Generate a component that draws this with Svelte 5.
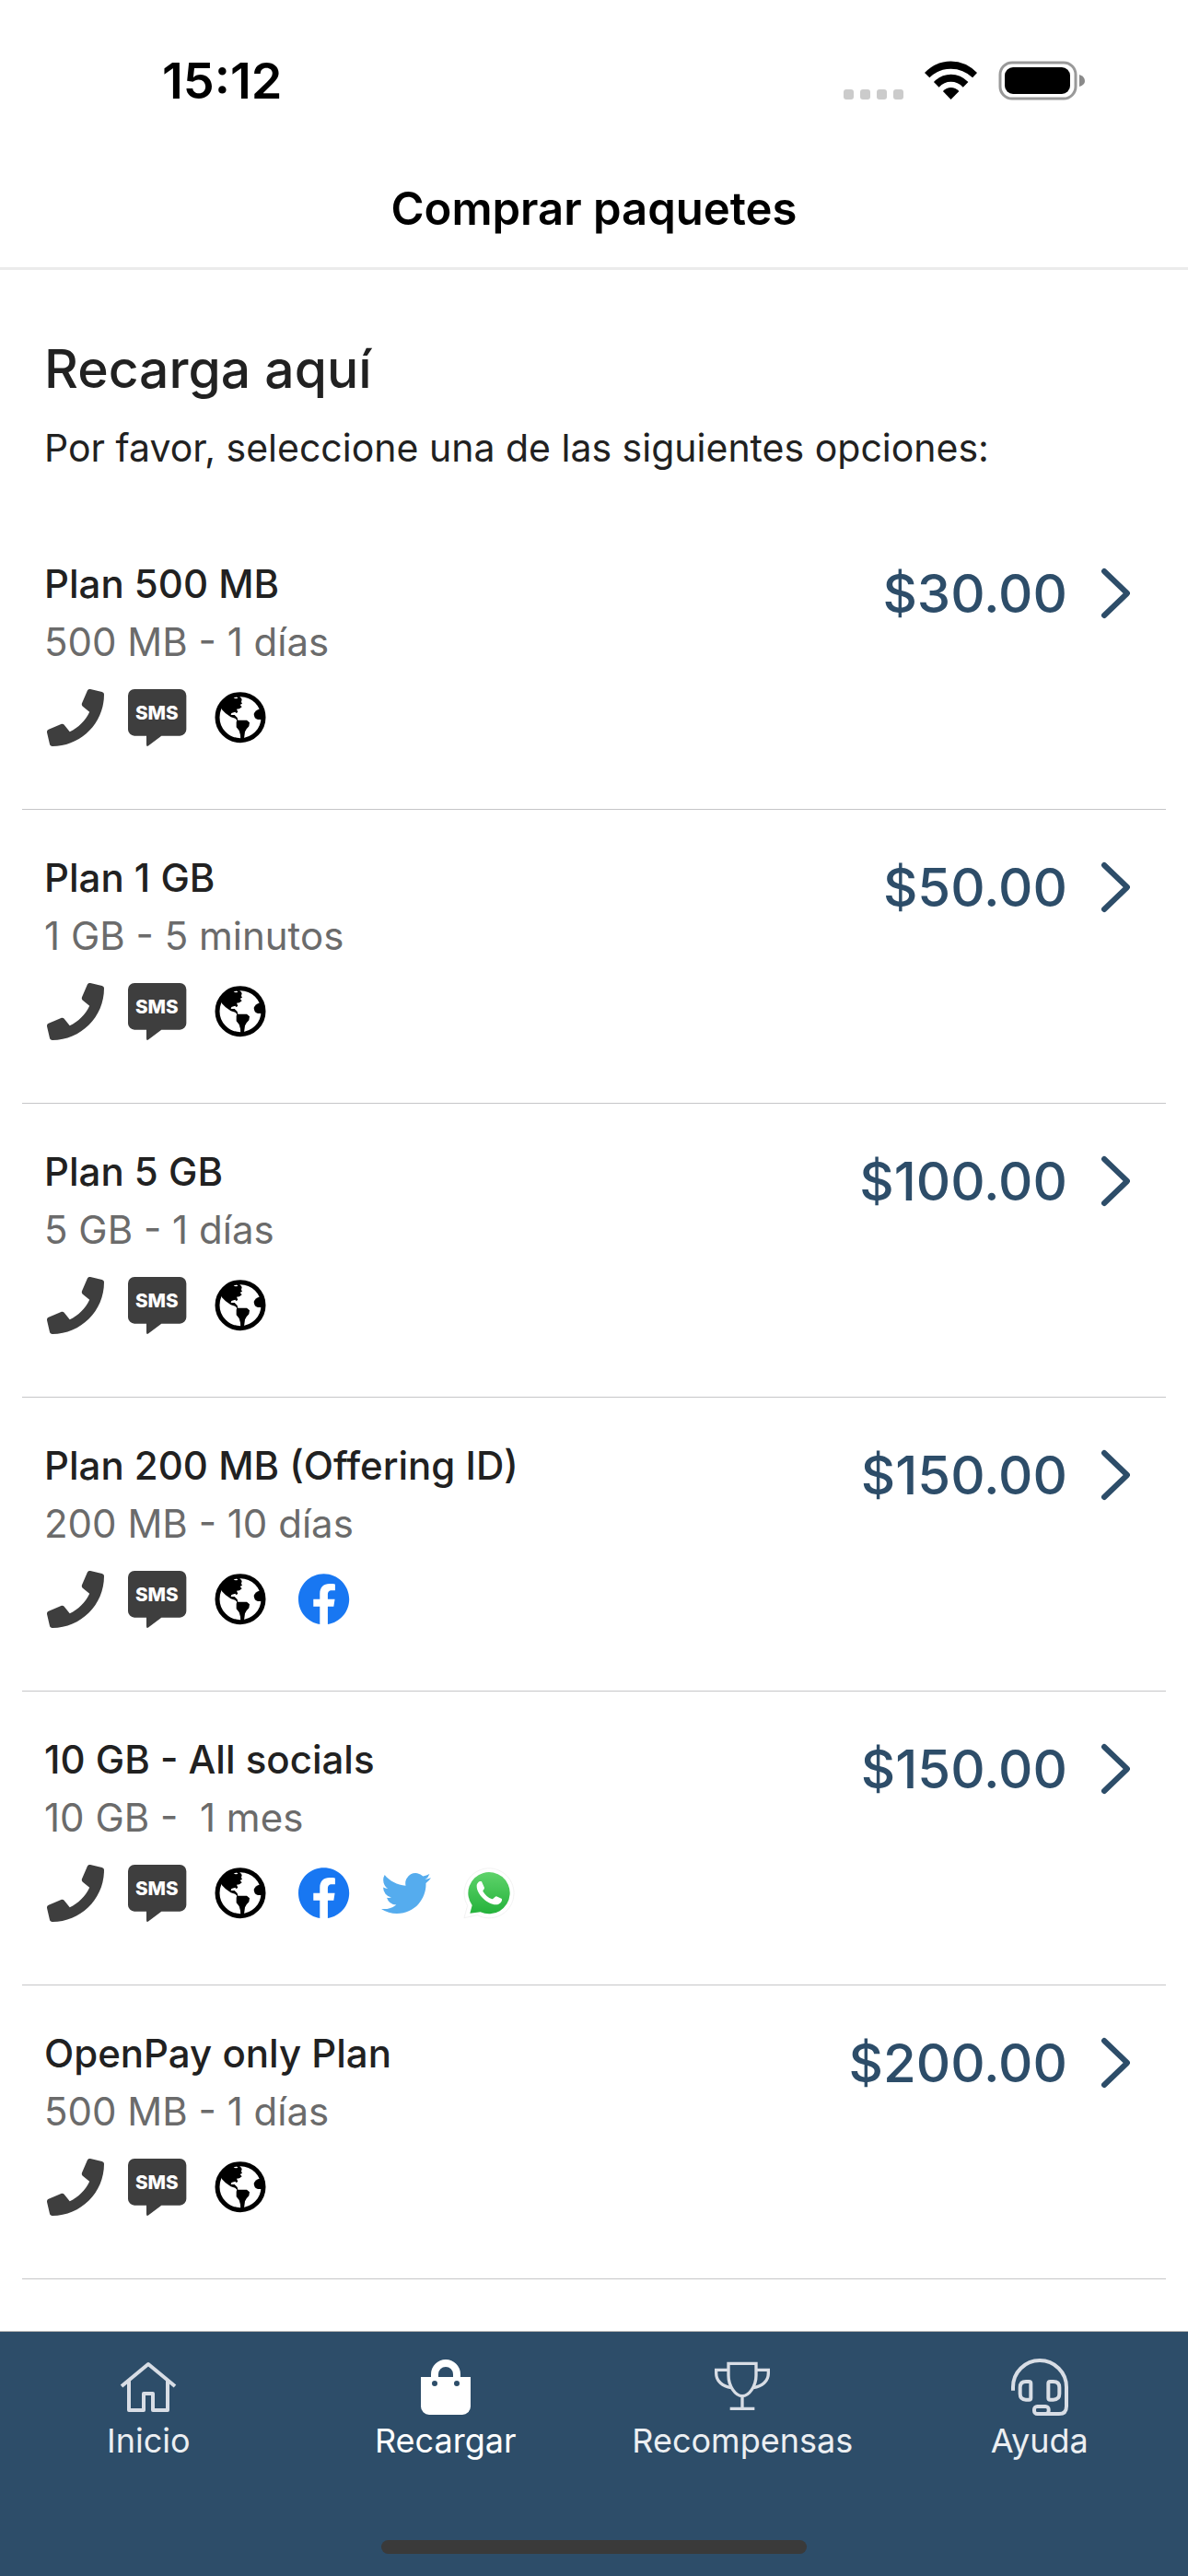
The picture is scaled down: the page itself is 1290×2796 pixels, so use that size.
<script>
  const plans = [
    { name: 'Plan 500 MB', detail: '500 MB - 1 días', price: '$30.00', services: ['phone', 'sms', 'globe'] },
    { name: 'Plan 1 GB', detail: '1 GB - 5 minutos', price: '$50.00', services: ['phone', 'sms', 'globe'] },
    { name: 'Plan 5 GB', detail: '5 GB - 1 días', price: '$100.00', services: ['phone', 'sms', 'globe'] },
    { name: 'Plan 200 MB (Offering ID)', detail: '200 MB - 10 días', price: '$150.00', services: ['phone', 'sms', 'globe', 'facebook'] },
    { name: '10 GB - All socials', detail: '10 GB -  1 mes', price: '$150.00', services: ['phone', 'sms', 'globe', 'facebook', 'twitter', 'whatsapp'] },
    { name: 'OpenPay only Plan', detail: '500 MB - 1 días', price: '$200.00', services: ['phone', 'sms', 'globe'] }
  ];

  const tabs = [
    { label: 'Inicio', icon: 'home', active: false },
    { label: 'Recargar', icon: 'bag', active: true },
    { label: 'Recompensas', icon: 'trophy', active: false },
    { label: 'Ayuda', icon: 'headset', active: false }
  ];
</script>

{#snippet serviceIcon(kind)}
  {#if kind === 'phone'}
    <svg class="service" viewBox="0 0 512 512" aria-hidden="true">
      <path fill="#3e3e3e" d="M493.4 24.6l-104-24c-11.3-2.6-22.9 3.3-27.5 13.9l-48 112c-4.2 9.8-1.4 21.3 6.9 28l60.6 49.6c-36 76.7-98.9 140.5-177.2 177.2l-49.6-60.6c-6.8-8.3-18.2-11.1-28-6.9l-112 48C3.9 366.5-2 378.1.6 389.4l24 104C27.1 504.2 36.7 512 48 512c256.1 0 464-207.5 464-464 0-11.2-7.7-20.9-18.6-23.4z" />
    </svg>
  {:else if kind === 'sms'}
    <svg class="service" viewBox="0 0 186 186" aria-hidden="true">
      <path fill="#3e3e3e" d="M15 0H163A21 21 0 0 1 184 21V131A21 21 0 0 1 163 152H103L61 184Q54 189 54 180V152H15A21 21 0 0 1 -6 131V21A21 21 0 0 1 15 0Z" />
      <text class="sms-label" x="88" y="98" text-anchor="middle">SMS</text>
    </svg>
  {:else if kind === 'globe'}
    <svg class="service" viewBox="-7 -9 186 186" aria-hidden="true">
      <circle cx="83" cy="83" r="75" fill="none" stroke="#000" stroke-width="15" />
      <path d="M14 50L44 18L58 14Q62 22 68 22L75 21L70 14L82 16L88 24L86 33L89 38L82 42L88 49L80 55L71 56L75 66L69 69L66 65L54 69L52 75L64 75L73 84L75 92H104L113 100L111 112L103 121L98 130L94 160H84L83 140L79 126L70 115V98L72 92L66 86L52 82L35 70L23 58L18 44Z" />
      <path d="M149 54Q130 60 127 72Q128 88 140 90L156 90V56Z" />
    </svg>
  {:else if kind === 'facebook'}
    <svg class="service" viewBox="0 0 62 62" aria-hidden="true">
      <g transform="translate(3 3) scale(2.3)">
        <path fill="#1877f2" d="M24 12.073c0-6.627-5.373-12-12-12s-12 5.373-12 12c0 5.99 4.388 10.954 10.125 11.854v-8.385H7.078v-3.47h3.047V9.43c0-3.007 1.792-4.669 4.533-4.669 1.312 0 2.686.235 2.686.235v2.953H15.83c-1.491 0-1.956.925-1.956 1.874v2.25h3.328l-.532 3.47h-2.796v8.385C19.612 23.027 24 18.062 24 12.073z" />
      </g>
    </svg>
  {:else if kind === 'twitter'}
    <svg class="service" viewBox="0 0 62 62" aria-hidden="true">
      <g transform="translate(3 4) scale(2.25)">
        <path fill="#55acee" d="M23.953 4.57a10 10 0 01-2.825.775 4.958 4.958 0 002.163-2.723c-.951.555-2.005.959-3.127 1.184a4.92 4.92 0 00-8.384 4.482C7.69 8.095 4.067 6.13 1.64 3.162a4.822 4.822 0 00-.666 2.475c0 1.71.87 3.213 2.188 4.096a4.904 4.904 0 01-2.228-.616v.06a4.923 4.923 0 003.946 4.827 4.996 4.996 0 01-2.212.085 4.936 4.936 0 004.604 3.417 9.867 9.867 0 01-6.102 2.105c-.39 0-.779-.023-1.17-.067a13.995 13.995 0 007.557 2.209c9.053 0 13.998-7.496 13.998-13.985 0-.21 0-.42-.015-.63A9.935 9.935 0 0024 4.59z" />
      </g>
    </svg>
  {:else}
    <svg class="service" viewBox="0 0 186 186" aria-hidden="true">
      <defs>
        <linearGradient id="wa-green" x1="0" y1="0" x2="0" y2="1">
          <stop offset="0" stop-color="#5fd36b" />
          <stop offset="1" stop-color="#24b23b" />
        </linearGradient>
      </defs>
      <path d="M20 133A81 81 0 1 1 52 164L9 173Z" fill="#fff" stroke="#ebebeb" stroke-width="2" />
      <path d="M35 132A68 68 0 1 1 62 154L28 158Z" fill="url(#wa-green)" />
      <path d="M50 70C50 58 60 52 66 55L75 75C75 80 69 84 70 86C77 98 87 107 100 112C104 113 110 102 114 103L132 111C134 120 124 131 112 130C87 130 50 98 50 70Z" fill="#fff" />
    </svg>
  {/if}
{/snippet}

{#snippet tabIcon(kind)}
  {#if kind === 'home'}
    <svg class="tab-icon" viewBox="0 0 64 64" aria-hidden="true" fill="none" stroke="currentColor" stroke-width="4" stroke-linejoin="round">
      <path d="M3 31L32 7L61 31" />
      <path d="M11 25V57H27V39H37V57H53V25" />
    </svg>
  {:else if kind === 'bag'}
    <svg class="tab-icon" viewBox="0 0 64 64" aria-hidden="true">
      <path d="M20 23V18A12 12 0 0 1 44 18V23" fill="none" stroke="currentColor" stroke-width="8" />
      <path fill="currentColor" fill-rule="evenodd" d="M5 21H59V53A9 9 0 0 1 50 62H14A9 9 0 0 1 5 53ZM20 25A3 3 0 1 0 20 31A3 3 0 1 0 20 25ZM44 25A3 3 0 1 0 44 31A3 3 0 1 0 44 25Z" />
    </svg>
  {:else if kind === 'trophy'}
    <svg class="tab-icon" viewBox="12 27 192 192" aria-hidden="true" fill="none" stroke="currentColor" stroke-width="10">
      <path d="M63 46H153V85C153 120 130 152 108 152C86 152 63 120 63 85Z" />
      <path d="M63 67H23V78C23 104 44 121 72 125M153 67H193V78C193 104 172 121 144 125" />
      <path d="M108 152V190M68 193H148" />
    </svg>
  {:else}
    <svg class="tab-icon" viewBox="981 27 192 192" aria-hidden="true" fill="none" stroke="currentColor" stroke-width="12">
      <path d="M990 134V123A87 87 0 0 1 1164 123V185Q1164 210 1140 210H1072" />
      <rect x="1059" y="186" width="47" height="24" rx="10" />
      <path d="M1042 105H1032Q1013 105 1013 124V145Q1013 164 1032 164H1042Q1048 164 1048 158V111Q1048 105 1042 105Z" />
      <path d="M1111 105H1121Q1141 105 1141 124V145Q1141 164 1121 164H1111Q1105 164 1105 158V111Q1105 105 1111 105Z" />
    </svg>
  {/if}
{/snippet}

<div class="app">
  <div class="status">
    <time>15:12</time>
    <div class="indicators">
      <svg width="65" height="43" viewBox="0 0 65 43" aria-hidden="true" fill="#cbcbcb">
        <rect y="31" width="11" height="11" rx="3" />
        <rect x="18" y="31" width="11" height="11" rx="3" />
        <rect x="36" y="31" width="11" height="11" rx="3" />
        <rect x="54" y="31" width="11" height="11" rx="3" />
      </svg>
      <svg width="57" height="43" viewBox="371 75 172 129" aria-hidden="true">
        <path d="M371 114Q408 76 457 76Q506 76 543 114L528 130Q498 101 457 101Q416 101 387 130Z" />
        <path d="M401 144Q426 119 457 119Q489 119 514 144L497 161Q480 143 457 143Q435 143 418 161Z" />
        <path d="M431 174Q443 162 457 162Q472 162 484 174L457 201Z" />
      </svg>
      <svg width="94" height="43" viewBox="0 0 94 43" aria-hidden="true">
        <rect x="2" y="2" width="82" height="39" rx="13" fill="none" stroke="#999" stroke-width="3" />
        <rect x="7" y="7" width="71" height="29" rx="9" />
        <path d="M88 15Q94 17 94 22Q94 26 88 28Z" fill="#8a8a8a" />
      </svg>
    </div>
  </div>

  <header>
    <h1>Comprar paquetes</h1>
  </header>

  <main>
    <section class="intro">
      <h2>Recarga aquí</h2>
      <p>Por favor, seleccione una de las siguientes opciones:</p>
    </section>

    <ul>
      {#each plans as plan}
        <li>
          <button type="button">
            <span class="info">
              <span class="name">{plan.name}</span>
              <span class="detail">{plan.detail}</span>
              <span class="services">
                {#each plan.services as kind}
                  {@render serviceIcon(kind)}
                {/each}
              </span>
            </span>
            <span class="cost">
              {plan.price}
              <svg width="32" height="56" viewBox="0 0 32 56" aria-hidden="true">
                <path d="M4 4L29 28L4 52" fill="none" stroke="currentColor" stroke-width="6" stroke-linecap="round" stroke-linejoin="round" />
              </svg>
            </span>
          </button>
        </li>
      {/each}
    </ul>
  </main>

  <footer>
    <nav>
      {#each tabs as tab}
        <a href="#{tab.icon}" class:active={tab.active} aria-current={tab.active ? 'page' : undefined}>
          {@render tabIcon(tab.icon)}
          <span>{tab.label}</span>
        </a>
      {/each}
    </nav>
    <div class="home-indicator"></div>
  </footer>
</div>

<style>
  :global(body) {
    background: #fff;
  }

  .app {
    display: flex;
    flex-direction: column;
    min-height: 100vh;
    font-family: Inter, 'Liberation Sans', sans-serif;
    color: #212121;
  }

  .status {
    box-sizing: border-box;
    height: 162px;
    padding: 12px 112px 0 176px;
    display: flex;
    align-items: center;
    justify-content: space-between;
    color: #000;
  }

  time {
    padding-top: 2px;
    font-size: 54px;
    font-weight: 600;
    line-height: 64px;
  }

  .indicators {
    display: flex;
    align-items: center;
    gap: 23px;
  }

  header {
    padding: 33px 0 31px;
    border-bottom: 3px solid #ebebeb;
    text-align: center;
    color: #000;
  }

  h1 {
    margin: 0;
    font-size: 49px;
    font-weight: 600;
    line-height: 64px;
  }

  main {
    flex: 1;
  }

  .intro {
    padding: 72px 48px 44px;
  }

  h2 {
    margin: 0 0 19px;
    font-size: 57px;
    font-weight: 500;
    line-height: 72px;
  }

  p {
    margin: 0;
    font-size: 41px;
    line-height: 60px;
  }

  ul {
    margin: 0 24px;
    padding: 0;
    list-style: none;
  }

  li {
    border-bottom: 1px solid #c6c6c8;
  }

  button {
    display: flex;
    justify-content: space-between;
    align-items: flex-start;
    width: 100%;
    padding: 42px 39px 68px 24px;
    border: 0;
    background: none;
    font: inherit;
    color: inherit;
    text-align: left;
  }

  .info {
    display: flex;
    flex-direction: column;
    font-size: 42px;
    line-height: 63px;
  }

  .name {
    font-weight: 500;
  }

  .detail {
    color: #6b6b6b;
    white-space: pre;
  }

  .services {
    display: flex;
    gap: 28px;
    margin-top: 20px;
    padding-left: 3px;
  }

  .service {
    width: 62px;
    height: 62px;
    overflow: visible;
  }

  .sms-label {
    font-size: 62px;
    font-weight: 800;
    fill: #fff;
  }

  .cost {
    display: flex;
    align-items: center;
    gap: 36px;
    font-size: 58px;
    font-weight: 500;
    line-height: 84px;
    color: #2d4d69;
  }

  footer {
    position: sticky;
    bottom: 0;
    padding-bottom: 24px;
    border-top: 1px solid #b2b2b2;
    background: #2d4d69;
  }

  nav {
    display: grid;
    grid-template-columns: repeat(4, 1fr);
  }

  a {
    display: flex;
    flex-direction: column;
    align-items: center;
    gap: 4px;
    padding: 28px 0 86px;
    font-size: 36px;
    line-height: 44px;
    color: #d8dde5;
    text-decoration: none;
  }

  a span {
    color: #eceff2;
  }

  a.active,
  a.active span {
    color: #fff;
  }

  .tab-icon {
    width: 64px;
    height: 64px;
  }

  .home-indicator {
    width: 462px;
    height: 15px;
    margin: 0 auto;
    border-radius: 8px;
    background: #3a3a3a;
  }
</style>
